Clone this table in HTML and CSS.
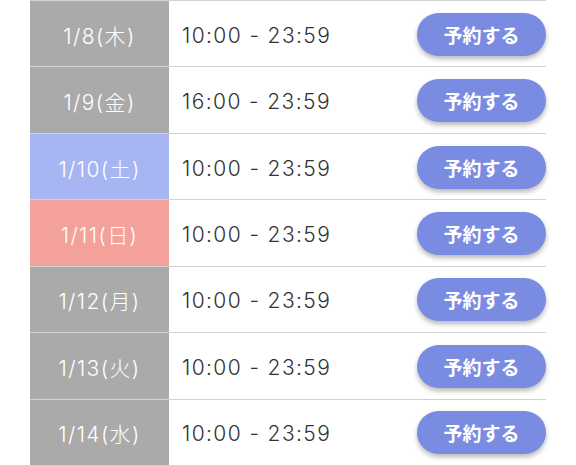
FILE: index.html
```html
<!DOCTYPE html>
<html lang="ja">
<head>
<meta charset="utf-8">
<link rel="stylesheet" href="styles.css">
</head>
<body>
<div class="schedule">
  <div class="row"><div class="date">1/8(木)</div><div class="time">10:00 - 23:59</div><button class="reserve">予約する</button></div>
  <div class="row"><div class="date">1/9(金)</div><div class="time">16:00 - 23:59</div><button class="reserve">予約する</button></div>
  <div class="row"><div class="date sat">1/10(土)</div><div class="time">10:00 - 23:59</div><button class="reserve">予約する</button></div>
  <div class="row"><div class="date sun">1/11(日)</div><div class="time">10:00 - 23:59</div><button class="reserve">予約する</button></div>
  <div class="row"><div class="date">1/12(月)</div><div class="time">10:00 - 23:59</div><button class="reserve">予約する</button></div>
  <div class="row"><div class="date">1/13(火)</div><div class="time">10:00 - 23:59</div><button class="reserve">予約する</button></div>
  <div class="row"><div class="date">1/14(水)</div><div class="time">10:00 - 23:59</div><button class="reserve">予約する</button></div>
</div>
</body>
</html>
```
FILE: styles.css
```css
html, body {
  margin: 0;
  padding: 0;
  background: #ffffff;
}
body {
  font-family: Inter, "Noto Sans CJK JP", sans-serif;
  overflow: hidden;
}
.schedule {
  margin-left: 30px;
  width: 516px;
  display: flex;
  flex-direction: column;
}
.row {
  display: flex;
  align-items: center;
  height: 66.43px;
  box-sizing: border-box;
  border-top: 1.5px solid #d2d2d2;
}
.date {
  width: 139px;
  align-self: stretch;
  display: flex;
  align-items: center;
  justify-content: center;
  background: #aaaaaa;
  color: #ffffff;
  font-size: 21px;
  font-weight: 300;
  letter-spacing: 1.4px;
  padding-top: 2px;
  box-sizing: border-box;
}
.date.sat { background: #a7b6f2; }
.date.sun { background: #f4a09b; }
.time {
  flex: 1;
  padding-left: 13px;
  padding-top: 3px;
  font-size: 21px;
  font-weight: 300;
  letter-spacing: 1.4px;
  color: #333333;
}
.reserve {
  width: 129px;
  height: 43px;
  border: none;
  border-radius: 22px;
  background: #7a8ce2;
  color: #ffffff;
  font-family: "Noto Sans CJK JP", sans-serif;
  font-size: 19px;
  font-weight: 700;
  box-shadow: 0 3px 5px rgba(0, 0, 0, 0.28);
  padding: 0;
  margin-top: 1px;
}
```
